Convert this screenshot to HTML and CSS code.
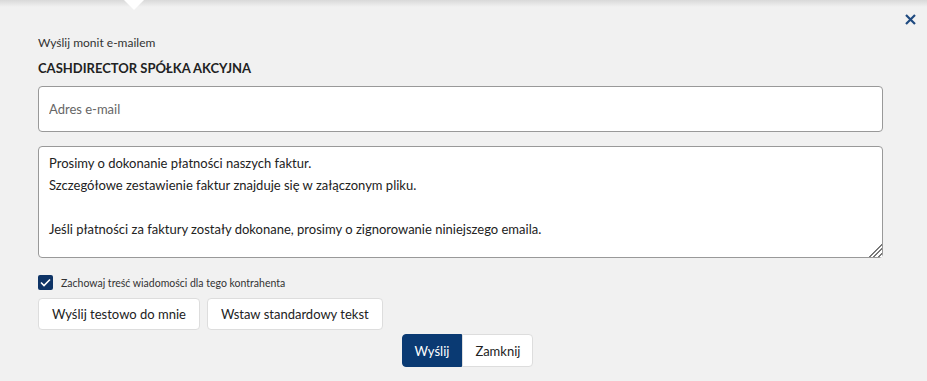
FILE: index.html
```html
<!DOCTYPE html>
<html lang="pl">
<head>
    <meta charset="UTF-8">
    <title>Wyślij monit e-mailem</title>
    <link rel="stylesheet" href="styles.css">
</head>
<body>
    <div class="panel">
        <span class="notch"></span>
        <button class="close" aria-label="Zamknij">
            <svg width="11" height="11" viewBox="0 0 11 11"><path d="M1 1L10 10M10 1L1 10" stroke="#1f4a80" stroke-width="2.2"/></svg>
        </button>
        <div class="heading">Wyślij monit e-mailem</div>
        <div class="company">CASHDIRECTOR SPÓŁKA AKCYJNA</div>
        <input class="field" type="text" placeholder="Adres e-mail">
        <textarea class="message">Prosimy o dokonanie płatności naszych faktur.
Szczegółowe zestawienie faktur znajduje się w załączonym pliku.

Jeśli płatności za faktury zostały dokonane, prosimy o zignorowanie niniejszego emaila.</textarea>
        <label class="keep">
            <span class="check">
                <svg width="11" height="9" viewBox="0 0 11 9"><path d="M1 4.5L4 7.5L10 1.5" fill="none" stroke="#fff" stroke-width="1.6"/></svg>
            </span>
            Zachowaj treść wiadomości dla tego kontrahenta
        </label>
        <div class="tools">
            <button class="btn">Wyślij testowo do mnie</button>
            <button class="btn">Wstaw standardowy tekst</button>
        </div>
        <div class="actions">
            <button class="btn primary">Wyślij</button>
            <button class="btn">Zamknij</button>
        </div>
    </div>
</body>
</html>
```

FILE: styles.css
```css
* {
    margin: 0;
    padding: 0;
    box-sizing: border-box;
}
body {
    background: #f1f1f1;
    font-family: 'Lato', 'Open Sans', sans-serif;
    color: #222;
}
.panel {
    position: relative;
    height: 381px;
    padding: 36px 44px 0 38px;
    display: flex;
    flex-direction: column;
    background: linear-gradient(#d9d9d9, #f1f1f1 7px);
}
.notch {
    position: absolute;
    top: 0;
    left: 124px;
    border-left: 10px solid transparent;
    border-right: 10px solid transparent;
    border-top: 10px solid #fff;
}
.close {
    position: absolute;
    top: 14px;
    right: 11px;
    border: none;
    background: none;
    width: 11px;
    height: 11px;
    display: flex;
    cursor: pointer;
}
.heading {
    font-size: 12px;
    line-height: 14px;
    color: #333;
}
.company {
    font-size: 13px;
    font-weight: 700;
    line-height: 16px;
    margin-top: 10px;
    color: #222;
}
.field {
    margin-top: 10px;
    height: 46px;
    border: 1px solid #999;
    border-radius: 4px;
    padding: 0 10px;
    font-family: inherit;
    font-size: 13px;
    background: #fff;
    outline: none;
}
.field::placeholder {
    color: #666;
}
.message {
    margin-top: 14px;
    height: 112px;
    border: 1px solid #999;
    border-radius: 4px;
    padding: 5px 10px;
    font-family: inherit;
    font-size: 13px;
    line-height: 22px;
    color: #222;
    background: #fff;
    resize: vertical;
    outline: none;
}
/* diagonal grip in the corner */
.message::-webkit-resizer {
    background:
        linear-gradient(135deg, #fff 50%, transparent 50%),
        repeating-linear-gradient(135deg, #fff 0 2px, #777 2px 3.2px);
}
.keep {
    margin-top: 17px;
    display: flex;
    align-items: center;
    gap: 8px;
    font-size: 10.5px;
    color: #333;
}
.check {
    width: 15px;
    height: 15px;
    background: #0e3466;
    border-radius: 2px;
    display: flex;
    align-items: center;
    justify-content: center;
}
.tools {
    margin-top: 8px;
    display: flex;
    gap: 7px;
}
.btn {
    height: 32px;
    padding: 0 13px;
    background: #fff;
    border: 1px solid #ddd;
    border-radius: 4px;
    font-family: inherit;
    font-size: 13px;
    color: #222;
    cursor: pointer;
}
.actions {
    margin-top: 4px;
    display: flex;
    justify-content: center;
    padding-left: 14px;
}
.actions .btn {
    height: 33px;
    padding: 0 12px;
}
.btn.primary {
    background: #0a3a73;
    border-color: #0a3a73;
    color: #fff;
    border-radius: 4px 0 0 4px;
}
.actions .btn + .btn {
    border-radius: 0 4px 4px 0;
}
```
